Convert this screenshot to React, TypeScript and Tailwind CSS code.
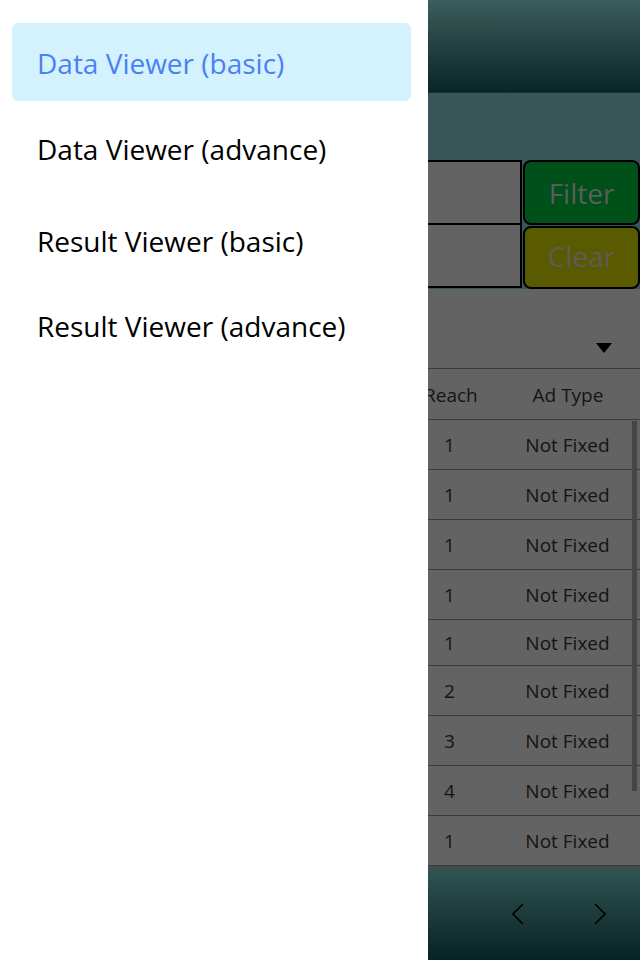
const ROWS: { reach: string; type: string; h: string }[] = [
  { reach: "1", type: "Not Fixed", h: "h-[50px]" },
  { reach: "1", type: "Not Fixed", h: "h-[50px]" },
  { reach: "1", type: "Not Fixed", h: "h-[50px]" },
  { reach: "1", type: "Not Fixed", h: "h-[50px]" },
  { reach: "1", type: "Not Fixed", h: "h-[46px]" },
  { reach: "2", type: "Not Fixed", h: "h-[50px]" },
  { reach: "3", type: "Not Fixed", h: "h-[50px]" },
  { reach: "4", type: "Not Fixed", h: "h-[50px]" },
  { reach: "1", type: "Not Fixed", h: "h-[50px]" },
];

const MENU = [
  { label: "Data Viewer (basic)", active: true, mt: "mt-[23px]" },
  { label: "Data Viewer (advance)", active: false, mt: "mt-[8px]" },
  { label: "Result Viewer (basic)", active: false, mt: "mt-[14px]" },
  { label: "Result Viewer (advance)", active: false, mt: "mt-[7px]" },
];

function Page() {
  return (
    <div className="flex h-full w-full flex-col">
      <div className="h-[93px] shrink-0 border-b border-[#1f2e2e] bg-gradient-to-b from-[#3d5e5c] to-[#072626]" />
      <div className="flex flex-col bg-[#385558] pt-[67px]">
        <div className="flex">
          <div className="flex flex-1 flex-col">
            <div className="h-[65px] border-2 border-black bg-[#636363]" />
            <div className="-mt-[2px] h-[65px] border-2 border-black bg-[#636363]" />
          </div>
          <div className="flex w-[118px] flex-col gap-[1px] pl-[1px]">
            <button className="h-[65px] rounded-lg border-2 border-black bg-[#00501a] text-[28px] text-[#5c5c5c]">
              Filter
            </button>
            <button className="h-[63px] rounded-lg border-2 border-black bg-[#5a5a00] pb-[3px] text-[28px] text-[#5c5c5c]">
              Clear
            </button>
          </div>
        </div>
      </div>
      <div className="flex flex-1 flex-col bg-[#636363]">
        <div className="flex h-[80px] shrink-0 items-end justify-end border-b border-[#3a3a3a] pb-[15px] pr-[28px]">
          <svg width="16" height="10" viewBox="0 0 16 10">
            <path d="M0 0 L16 0 L8 10 Z" fill="#000" />
          </svg>
        </div>
        <div className="relative flex-1 text-[19px] text-[#141414]">
          <div className="grid h-[51px] grid-cols-[400px_100px_136px] items-center border-b border-[#3a3a3a] pt-[2px]">
            <div />
            <div className="pl-[24px]">Reach</div>
            <div className="text-center">Ad Type</div>
          </div>
          {ROWS.map((r, i) => (
            <div
              key={i}
              className={`grid ${r.h} grid-cols-[400px_100px_135px] items-center border-b border-[#3a3a3a] pt-[2px]`}
            >
              <div />
              <div className="pl-[44px]">{r.reach}</div>
              <div className="text-center">{r.type}</div>
            </div>
          ))}
          <div className="absolute right-[3px] top-[52px] h-[370px] w-[5px] bg-[#454545]" />
        </div>
        <div className="flex h-[94px] shrink-0 items-center justify-end gap-[70px] border-t-2 border-[#4a4a4a] bg-gradient-to-b from-[#325452] to-[#062424] pr-[34px]">
          <svg width="12" height="22" viewBox="0 0 12 22">
            <path d="M11 1 L1 11 L11 21" fill="none" stroke="#000" strokeWidth="1.6" />
          </svg>
          <svg width="12" height="22" viewBox="0 0 12 22">
            <path d="M1 1 L11 11 L1 21" fill="none" stroke="#000" strokeWidth="1.6" />
          </svg>
        </div>
      </div>
    </div>
  );
}

export default function App() {
  return (
    <div
      className="relative h-[960px] w-[640px] overflow-hidden bg-[#636363]"
      style={{ fontFamily: '"Open Sans", "Noto Sans", sans-serif' }}
    >
      <Page />
      <nav className="absolute left-0 top-0 flex h-full w-[428px] flex-col bg-white pl-[12px] pr-[17px]">
        {MENU.map((m) => (
          <div
            key={m.label}
            className={`h-[78px] ${m.mt} flex items-center rounded-md pl-[25px] pt-[2px] text-[28px] ${
              m.active ? "bg-[#d4f2fd] text-[#4a80f7]" : "text-black"
            }`}
          >
            {m.label}
          </div>
        ))}
      </nav>
    </div>
  );
}
